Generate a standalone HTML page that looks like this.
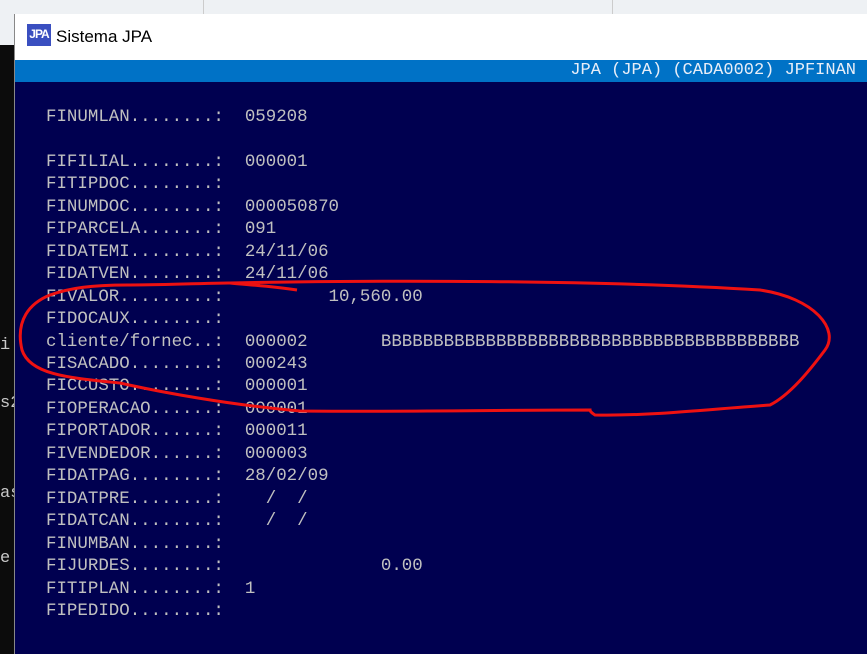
<!DOCTYPE html>
<html><head><style>
body{margin:0;width:867px;height:654px;overflow:hidden;background:#0c0c0c;position:relative;font-family:"Liberation Mono",monospace}
.top{position:absolute;left:0;top:0;width:867px;height:45px;background:#eef1f4}
.win{position:absolute;left:14px;top:14px;width:853px;height:640px;background:#000050;border-left:1px solid #888}
.title{position:absolute;left:0;top:0;width:853px;height:46px;background:#fff}
.logo{position:absolute;left:12px;top:10px;width:24px;height:22px;background:#3a4fc0;color:#fff;font:bold 12px "Liberation Sans",sans-serif;line-height:20px;text-align:center;letter-spacing:-1px}
.ttext{position:absolute;left:41px;top:13px;font:17px "Liberation Sans",sans-serif;color:#000}
.bar{position:absolute;left:0;top:46px;width:853px;height:22px;background:#0072c6;color:#e8eef8;font-size:17px;line-height:22px;text-align:right;box-sizing:border-box;padding-right:12px}
pre{position:absolute;left:31px;top:92px;margin:0;color:#c0c0c0;font-size:17.45px;line-height:22.45px;font-family:"Liberation Mono",monospace}
.l{position:absolute;left:0;color:#c8c8c8;font-size:17px}
</style></head><body>
<div class="top"></div>
<div style="position:absolute;left:203px;top:0;width:1px;height:14px;background:#ccc"></div>
<div style="position:absolute;left:612px;top:0;width:1px;height:14px;background:#ccc"></div>
<div class="l" style="top:336px">i</div>
<div class="l" style="top:394px">s2</div>
<div class="l" style="top:484px">as</div>
<div class="l" style="top:549px">e.</div>
<div class="win">
<div class="title"><div class="logo">JPA</div><div class="ttext">Sistema JPA</div></div>
<div class="bar">JPA (JPA) (CADA0002) JPFINAN</div>
<pre>FINUMLAN........:  059208

FIFILIAL........:  000001
FITIPDOC........:
FINUMDOC........:  000050870
FIPARCELA.......:  091
FIDATEMI........:  24/11/06
FIDATVEN........:  24/11/06
FIVALOR.........:          10,560.00
FIDOCAUX........:
cliente/fornec..:  000002       BBBBBBBBBBBBBBBBBBBBBBBBBBBBBBBBBBBBBBBB
FISACADO........:  000243
FICCUSTO........:  000001
FIOPERACAO......:  000001
FIPORTADOR......:  000011
FIVENDEDOR......:  000003
FIDATPAG........:  28/02/09
FIDATPRE........:    /  /
FIDATCAN........:    /  /
FINUMBAN........:
FIJURDES........:               0.00
FITIPLAN........:  1
FIPEDIDO........:</pre>
</div>
<svg width="867" height="654" style="position:absolute;left:0;top:0">
<path d="M297,290 C270,286 250,285 230,283 C380,280 600,280 760,290 C815,298 840,330 825,350 C810,370 790,395 770,405 C700,410 650,416 595,415 C590,412 590,410 590,410 C500,410 400,412 300,411 C230,405 160,392 120,383 C70,378 30,375 22,350 C15,320 30,303 50,295 C70,288 90,285 130,285 C180,285 220,282 260,283" fill="none" stroke="#ee1111" stroke-width="3"/>
</svg>
</body></html>
